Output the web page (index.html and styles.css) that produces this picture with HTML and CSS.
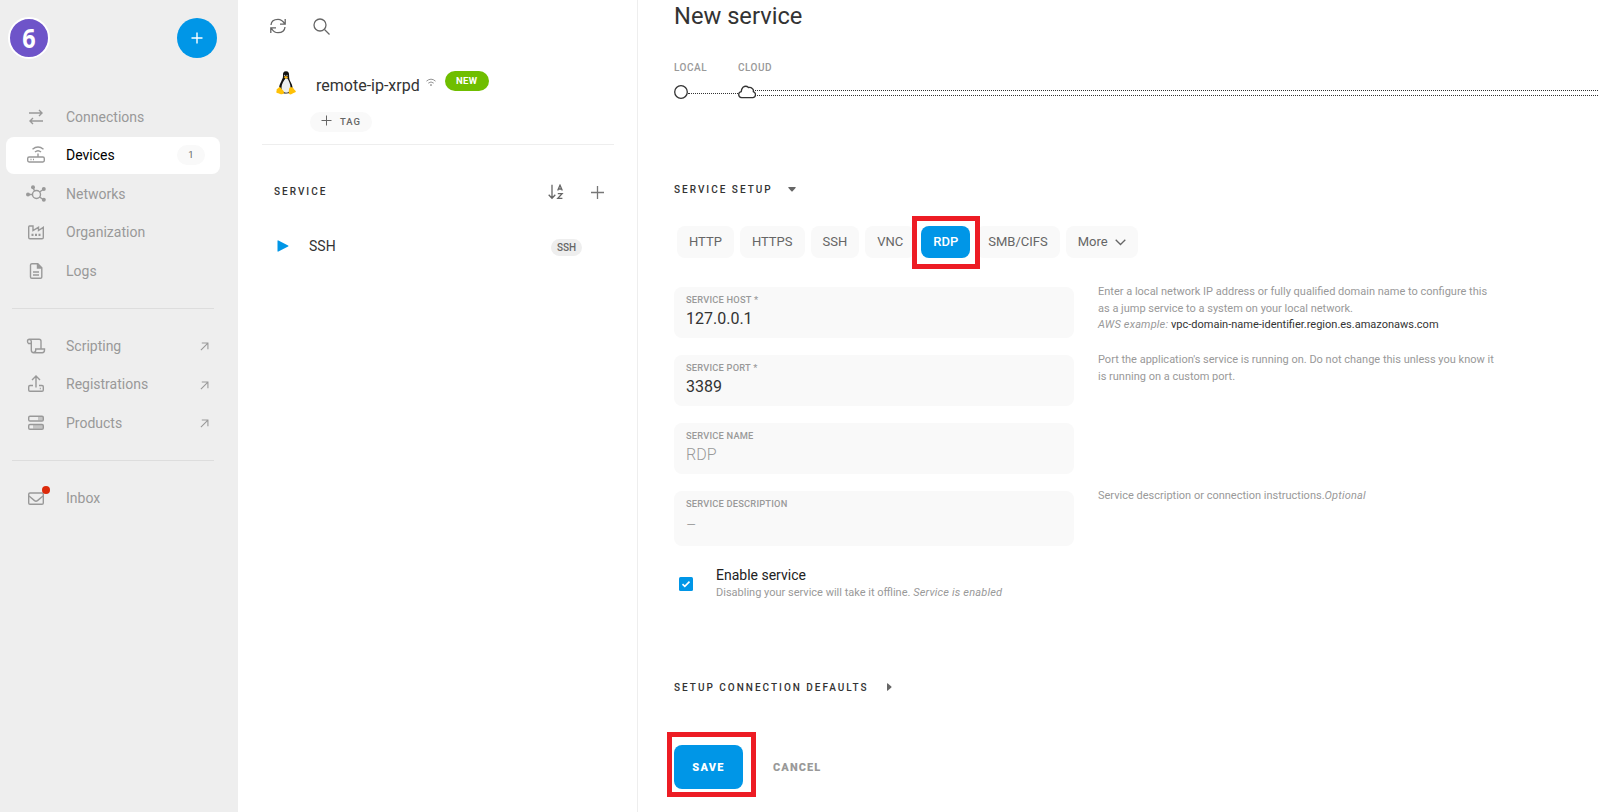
FILE: index.html
```
<!DOCTYPE html>
<html lang="en">
<head>
<meta charset="utf-8">
<meta name="viewport" content="width=device-width, initial-scale=1">
<title>New service</title>
<link rel="stylesheet" href="styles.css">
</head>
<body>

<div class="app">

<!-- Sidebar -->
<div class="sidebar">
  <div class="sidebar-top">
    <div class="avatar"><span>6</span></div>
    <button class="add-button">
      <svg width="12" height="12" viewBox="0 0 12 12"><path d="M6 0.5v11M0.5 6h11" stroke="#fff" stroke-width="1.4"/></svg>
    </button>
  </div>

  <nav class="menu">
    <a class="menu-item">
      <svg class="icon" viewBox="0 0 20 20"><path d="M3 6h13M13 3l3 3-3 3M17 14H4M7 11l-3 3 3 3"/></svg>
      <span>Connections</span>
    </a>
    <a class="menu-item active">
      <svg class="icon" viewBox="0 0 20 20"><rect x="1.7" y="12" width="16.6" height="5" rx="1.4"/><path d="M12 12V8.5M6.5 4.3q5.500-4.600 11 0M9 7q3-2.600 6 0"/><path d="M4.500 14.500h1M7 14.500h1"/></svg>
      <span>Devices</span>
      <span class="count">1</span>
    </a>
    <a class="menu-item">
      <svg class="icon" viewBox="0 0 20 20"><circle cx="10.500" cy="10.500" r="4"/><path d="M2 10.500h4.500M7 3.500l1.600 3.500M13.500 8L18 5M13.500 13l4.500 3"/><g class="dots"><circle cx="2" cy="10.500" r="2"/><circle cx="7" cy="3.200" r="2"/><circle cx="17.800" cy="5" r="2"/><circle cx="17.800" cy="15.800" r="2"/></g></svg>
      <span>Networks</span>
    </a>
    <a class="menu-item">
      <svg class="icon" viewBox="0 0 20 20"><path d="M2.700 5v10.500q0 1.300 1.300 1.300h12q1.300 0 1.300-1.300V5.300L12.500 8.500V5.300L7 8.500V4H3.500q-.8 0-.8 1z"/><path d="M5.500 12.800h2M9 12.800h2M12.500 12.800h2" stroke-width="2.200"/></svg>
      <span>Organization</span>
    </a>
    <a class="menu-item">
      <svg class="icon" viewBox="0 0 20 20"><path d="M5.300 2.700h6.500l4 4v9.300q0 1.300-1.300 1.300H5.800q-1.300 0-1.300-1.300V4q0-1.300 1.300-1.300z"/><path d="M11.500 2.700V7h4.300" fill="#999"/><path d="M7 11h6M7 14h6"/></svg>
      <span>Logs</span>
    </a>
  </nav>

  <hr class="menu-line">

  <nav class="menu">
    <a class="menu-item">
      <svg class="icon" viewBox="0 0 20 20"><path d="M4.600 7.500H2.500q-1-.8-1-2.200 0-2 1.900-2H13q2 0 2 2v7M3.400 3.300q1.900.2 1.900 2.200v8.800q0 2.400 2.400 2.400h8.500q2.300 0 2.300-2.700v-1H9.700v1.300q0 2-2 2"/></svg>
      <span>Scripting</span>
      <svg class="out" viewBox="0 0 10 10"><path d="M1 9l7.500-7.500M2 1.200h6.800V8"/></svg>
    </a>
    <a class="menu-item">
      <svg class="icon" viewBox="0 0 20 20"><path d="M10 13.500V2.500M6 6l4-4 4 4M7 11.500H4q-1.300 0-1.300 1.300V16q0 1.300 1.300 1.300h12q1.300 0 1.300-1.300v-3.200q0-1.300-1.300-1.300h-3M13.800 14.500h1"/></svg>
      <span>Registrations</span>
      <svg class="out" viewBox="0 0 10 10"><path d="M1 9l7.500-7.500M2 1.200h6.800V8"/></svg>
    </a>
    <a class="menu-item">
      <svg class="icon" viewBox="0 0 20 20"><path d="M12 3.500h5v4h-5zM7 11.800h10v4H7z" class="shade"/><rect x="2.700" y="3.200" width="14.600" height="4.800" rx="1.300"/><rect x="2.700" y="11.500" width="14.600" height="4.800" rx="1.300"/></svg>
      <span>Products</span>
      <svg class="out" viewBox="0 0 10 10"><path d="M1 9l7.500-7.500M2 1.200h6.800V8"/></svg>
    </a>
  </nav>

  <hr class="menu-line">

  <nav class="menu">
    <a class="menu-item">
      <svg class="icon" viewBox="0 0 20 20"><rect x="2.700" y="5" width="14.600" height="11.300" rx="1.300"/><path d="M3 8l5.500 4.600q1.500 1.200 3 0L17 8"/></svg>
      <span>Inbox</span>
      <i class="unread"></i>
    </a>
  </nav>
</div>

<!-- Device and its services -->
<div class="device">
  <div class="toolbar">
    <svg width="16" height="16" viewBox="0 0 16 16"><path d="M1 7Q1.500 1.300 8 1.300q4 0 6.500 4.200M15.200 1v5.200H10M15 9q-.5 5.700-7 5.700-4 0-6.500-4.200M.8 15V9.800H6"/></svg>
    <svg width="17" height="17" viewBox="0 0 17 17"><circle cx="7" cy="7" r="6"/><path d="M11.500 11.500l5 5"/></svg>
  </div>

  <div class="device-head">
    <svg class="tux" width="20" height="24" viewBox="0 0 20 24">
      <path d="M10 .3C7.500.3 6.800 2 7 4.500c.2 2.500-.8 3.500-1.800 6C4 13 2.800 15 3.200 18c.5 3.500 3 4.500 6.800 4.500s6.200-1.500 6.500-4.500c.3-3-1-5.500-2.400-8-.9-1.700-1-3.500-1-5.200C13.200 1.800 12.500.3 10 .3z" fill="#111"/>
      <path d="M9.500 7.500C7.800 9.500 5.500 13 5.500 16.500c0 3 1.700 5.200 4.500 5.200s4.600-2 4.600-5c0-3.500-2-7-3.100-9.200z" fill="#eceff1"/>
      <circle cx="8.600" cy="4.500" r=".7" fill="#bbb"/><circle cx="11" cy="4.500" r=".7" fill="#bbb"/>
      <path d="M7.700 6l2-1 2.600 1-2.400 1.900z" fill="#fbb615"/>
      <path d="M3.800 15.800L7.500 20c1 1.800.3 3.300-1.500 3.300-1.700 0-3.300-1-5-1.300-1-.3-.8-1.200-.4-2 .2-1.500-.2-2 .8-2.300 1.200-.3 1.300-1.400 2.400-1.900zM16 16.200c1 .2 1.500 1.200 2.200 2.300l1.500 1.500c.5.800-.5 1.200-1.600 1.700-1.700.8-2.800 2-4.400 1.600-1.500-.4-1-2.500-.7-4.500.1-1.500.5-2.600 1.400-2.600z" fill="#ffc107"/>
    </svg>
    <div class="device-info">
      <div class="device-name">
        <span>remote-ip-xrpd</span>
        <svg width="11" height="9" viewBox="0 0 11 9"><path d="M.5 3Q5.500-1.300 10.500 3M2.500 5.200q3-2.600 6 0" /><circle cx="5.500" cy="7.300" r=".6"/></svg>
        <b class="new">NEW</b>
      </div>
      <button class="tag">
        <svg width="11" height="11" viewBox="0 0 11 11"><path d="M5.500 .5v10M.5 5.500h10"/></svg>
        <span>TAG</span>
      </button>
    </div>
  </div>

  <div class="list-title">
    <h3 class="heading">SERVICE</h3>
    <svg class="sort" width="16" height="16" viewBox="0 0 16 16"><path d="M4 .8v13M.7 10.800L4 14.200l3.300-3.400M9.700 6.500l2.300-5.300 2.300 5.300M10.300 5h3.400M9.800 9.700h4.300l-4.300 4.600h4.600"/></svg>
    <svg class="plus" width="13" height="13" viewBox="0 0 13 13"><path d="M6.500 0v13M0 6.500h13"/></svg>
  </div>

  <div class="service-row">
    <svg width="12" height="12" viewBox="0 0 12 12"><path d="M.5 .9Q.5 0 1.400.4l9.700 5q.9.600 0 1.200l-9.700 5Q.5 12 .5 11.100z" fill="#0096e7"/></svg>
    <span>SSH</span>
    <span class="type">SSH</span>
  </div>
</div>

<!-- New service form -->
<div class="main">
  <h1 class="title">New service</h1>

  <div class="route">
    <div class="hop local">
      <label>LOCAL</label>
      <div class="track">
        <svg width="14" height="14" viewBox="0 0 14 14"><circle cx="7" cy="7" r="6.300"/></svg>
        <i class="single"></i>
      </div>
    </div>
    <div class="hop cloud">
      <label>CLOUD</label>
      <div class="track">
        <svg width="18" height="14" viewBox="0 0 18 14"><path d="M3.500 12.700Q.7 12.200.7 9.500q0-2.300 2.500-2.800Q3.500 3.700 5 2.200q3-2 5.500.3 2.200-.5 4 1.200 1.300 1 .8 3 2.200.8 2.200 3 0 2.500-2.500 3z"/></svg>
        <i class="double"></i>
      </div>
    </div>
  </div>

  <h3 class="heading setup">SERVICE SETUP <svg width="8" height="5" viewBox="0 0 8 5"><path d="M.8 0h6.400q1 0 .3.900L4.600 4.300q-.6.600-1.200 0L.5.900Q-.2 0 .8 0z"/></svg></h3>

  <div class="types">
    <button>HTTP</button>
    <button>HTTPS</button>
    <button>SSH</button>
    <button>VNC</button>
    <button class="selected">RDP<i class="mark"></i></button>
    <button>SMB/CIFS</button>
    <button>More <svg width="11" height="7" viewBox="0 0 11 7"><path d="M.7.800l4.800 4.700L10.300.800"/></svg></button>
  </div>

  <div class="form-row">
    <div class="field"><label>SERVICE HOST *</label><p>127.0.0.1</p></div>
    <div class="help">Enter a local network IP address or fully qualified domain name to configure this as a jump service to a system on your local network.<br><i>AWS example:</i> <b>vpc-domain-name-identifier.region.es.amazonaws.com</b></div>
  </div>
  <div class="form-row">
    <div class="field"><label>SERVICE PORT *</label><p>3389</p></div>
    <div class="help">Port the application's service is running on. Do not change this unless you know it is running on a custom port.</div>
  </div>
  <div class="form-row">
    <div class="field empty"><label>SERVICE NAME</label><p>RDP</p></div>
  </div>
  <div class="form-row">
    <div class="field empty tall"><label>SERVICE DESCRIPTION</label><p>–</p></div>
    <div class="help">Service description or connection instructions.<i>Optional</i></div>
  </div>

  <div class="enable">
    <svg width="14" height="14" viewBox="0 0 14 14"><rect width="14" height="14" rx="1.500" fill="#0096e7"/><path d="M3.500 7.200l2.300 2.200 4.700-4.800" fill="none" stroke="#fff" stroke-width="1.600"/></svg>
    <div>
      <div class="enable-label">Enable service</div>
      <div class="enable-help">Disabling your service will take it offline. <i>Service is enabled</i></div>
    </div>
  </div>

  <h3 class="heading defaults">SETUP CONNECTION DEFAULTS <svg width="5" height="8" viewBox="0 0 5 8"><path d="M0 .8v6.400q0 1 .9.300l3.400-2.900q.6-.6 0-1.200L.9.500Q0-.2 0 .8z"/></svg></h3>

  <div class="actions">
    <button class="save">SAVE<i class="mark"></i></button>
    <button class="cancel">CANCEL</button>
  </div>
</div>

</div>

</body>
</html>
```
FILE: styles.css
```
* {box-sizing: border-box;}

body {
  margin: 0;
  font-family: Roboto, "Liberation Sans", sans-serif;
  font-size: 14px;
  color: #333;
  background: #fff;
}

button {
  font-family: inherit;
  border: none;
  padding: 0;
  cursor: pointer;
}

svg {
  display: block;
  flex: none;
}

.app {
  display: flex;
  height: 812px;
  overflow: hidden;
}

/* Sidebar */
.sidebar {
  width: 238px;
  flex: none;
  background: #eee;
}

.sidebar-top {
  display: flex;
  justify-content: space-between;
  align-items: center;
  height: 42px;
  margin: 17px 21px 39px 8px;
}

.avatar {
  width: 42px;
  height: 42px;
  border: 2px solid #fff;
  border-radius: 50%;
  background: #6e54c9;
  color: #fff;
  font: bold 26px/38px "Noto Sans", sans-serif;
  text-align: center;
}

.avatar span {
  display: block;
  transform: scaleX(.9);
}

.add-button {
  display: flex;
  justify-content: center;
  align-items: center;
  width: 40px;
  height: 40px;
  border-radius: 50%;
  background: #0096e7;
}

.menu-item {
  display: flex;
  align-items: center;
  position: relative;
  height: 37px;
  margin: 0 18px 1.5px 6px;
  padding-left: 20px;
  border-radius: 8px;
  font-size: 14px;
  color: #999;
}

.icon {
  width: 20px;
  height: 20px;
  margin-right: 20px;
  fill: none;
  stroke: #999;
  stroke-width: 1.400;
}

.icon .dots, .icon .shade {
  fill: #999;
  stroke: none;
}

.icon .shade {
  fill: #c4c4c4;
}

.menu-item.active {
  background: #fff;
  color: #000;
}

.count {
  width: 28px;
  margin-left: auto;
  margin-right: 15px;
  border-radius: 10px;
  background: #f9f9f9;
  color: #666;
  font-size: 9.500px;
  line-height: 20px;
  text-align: center;
}

.menu-line {
  height: 1px;
  margin: 19px 24px 18px 12px;
  border: none;
  background: #ddd;
}

.out {
  width: 9px;
  height: 9px;
  margin-top: 2px;
  margin-left: auto;
  margin-right: 11px;
  fill: none;
  stroke: #999;
  stroke-width: 1.200;
}

.unread {
  position: absolute;
  left: 36px;
  top: 7px;
  width: 8px;
  height: 8px;
  border-radius: 50%;
  background: #dc2a0a;
}

/* Device column */
.device {
  width: 400px;
  flex: none;
  padding: 18px 23px 0 24px;
  border-right: 1px solid #eee;
}

.toolbar {
  display: flex;
  gap: 27px;
  height: 17px;
  padding-left: 8px;
}

.toolbar svg, .device-name svg, .tag svg, .list-title svg, .types svg {
  fill: none;
  stroke: #666;
  stroke-width: 1.300;
}

.device-head {
  display: flex;
  height: 110px;
  padding: 36px 0 0 14px;
  border-bottom: 1px solid #eee;
}

.device-info {
  padding-left: 14px;
}

.device-name {
  display: flex;
  height: 20px;
  padding-left: 6px;
  font-size: 16px;
  line-height: 29px;
}

.device-name svg {
  margin: 7px 9px 0 6px;
  width: 10px;
  stroke: #888;
  stroke-width: 1;
}

.new {
  width: 44px;
  height: 20px;
  border-radius: 10px;
  background: #6fbe00;
  color: #fff;
  font-size: 9.500px;
  line-height: 19px;
  letter-spacing: .4px;
  text-align: center;
}

.tag {
  display: flex;
  align-items: center;
  gap: 8px;
  width: 62px;
  height: 20px;
  margin-top: 21px;
  padding: 0 0 1px 11px;
  border-radius: 10px;
  background: #f9f9f9;
  color: #666;
  font-size: 9.500px;
  font-weight: 500;
  letter-spacing: 1px;
}

.tag svg {
  margin-top: -2px;
  stroke-width: 1;
}

.heading {
  margin: 0;
  font-size: 10px;
  font-weight: 500;
  line-height: 14px;
  letter-spacing: 2px;
}

.list-title {
  display: flex;
  align-items: center;
  height: 22px;
  margin-top: 36px;
  padding-left: 12px;
}

.list-title .sort {
  margin-left: auto;
  margin-right: 27px;
}

.list-title .plus {
  margin-right: 10px;
  stroke: #777;
}

.service-row {
  display: flex;
  align-items: center;
  height: 24px;
  margin: 31px 32px 0 15px;
  font-size: 14px;
}

.service-row svg {
  margin-right: 20px;
}

.type {
  width: 31px;
  margin: 3px 0 0 auto;
  border-radius: 9px;
  background: #eee;
  color: #666;
  font-size: 10px;
  font-weight: 500;
  line-height: 17px;
  text-align: center;
}

/* Form column */
.main {
  flex: 1;
  min-width: 0;
  padding-left: 36px;
}

.title {
  height: 32px;
  margin: 0 0 29px;
  font-size: 23.700px;
  font-weight: 400;
  line-height: 32px;
}

.route {
  display: flex;
}

.local {
  width: 64px;
}

.cloud {
  flex: 1;
}

.hop label {
  display: block;
  height: 14px;
  color: #999;
  font-size: 10px;
  font-weight: 500;
  line-height: 14px;
  letter-spacing: .5px;
}

.track {
  display: flex;
  align-items: center;
  height: 14px;
  margin-top: 10px;
}

.track svg {
  fill: none;
  stroke: #333;
  stroke-width: 1.300;
}

.single {
  flex: 1;
  margin-top: 3px;
  border-top: 1px dotted #333;
}

.double {
  flex: 1;
  height: 6px;
  margin-top: 2px;
  margin-left: -1px;
  border-top: 1px dotted #333;
  border-bottom: 1px dotted #333;
}

.heading svg {
  display: inline-block;
  fill: #666;
}

.setup {
  margin-top: 84px;
}

.setup svg {
  margin: 0 0 1px 11px;
}

.types {
  display: flex;
  gap: 6px;
  margin: 29px 0 29px 3px;
}

.types button {
  position: relative;
  height: 32px;
  padding: 0 12px;
  border-radius: 8px;
  background: #f9f9f9;
  color: #666;
  font-size: 13px;
  line-height: 32px;
}

.types svg {
  display: inline-block;
  margin-left: 4px;
}

.types .selected {
  z-index: 1;
  background: #0096e7;
  color: #fff;
  font-weight: 500;
}

/* Red frames around the buttons to click */
.mark {
  position: absolute;
  border: 5px solid #ed1c24;
}

.selected .mark {
  inset: -10px -10px -11px -9px;
}

.save .mark {
  inset: -13px -13px -8px -7px;
}

.form-row {
  display: flex;
  gap: 24px;
  height: 51px;
  margin-bottom: 17px;
}

.field {
  width: 400px;
  height: 51px;
  padding: 6px 12px 0;
  border-radius: 8px;
  background: #f9f9f9;
}

.field label {
  display: block;
  color: #999;
  font-size: 9.300px;
  font-weight: 500;
  line-height: 13px;
  letter-spacing: .2px;
}

.field p {
  margin: 3px 0 0;
  font-size: 16px;
  line-height: 20px;
}

.field.empty p {
  color: #999;
  font-weight: 300;
}

.field.tall {
  height: 55px;
}

.field.tall p {
  margin-top: 6px;
}

.help {
  width: 402px;
  margin-top: -3px;
  color: #999;
  font-size: 11px;
  line-height: 16.500px;
}

.help i, .enable-help i {
  letter-spacing: .18px;
}

.help b {
  color: #333;
  font-weight: 400;
}

.enable {
  display: flex;
  align-items: center;
  height: 40px;
  margin-top: 22px;
  padding-left: 5px;
}

.enable svg {
  margin-right: 23px;
}

.enable-label {
  line-height: 18px;
  color: #222;
}

.enable-help {
  color: #999;
  font-size: 11px;
  line-height: 18px;
}

.defaults {
  margin-top: 77px;
}

.defaults svg {
  margin: 0 0 0 14px;
}

.actions {
  display: flex;
  align-items: center;
  gap: 30px;
  margin-top: 50px;
}

.save {
  position: relative;
  width: 69px;
  height: 44px;
  border-radius: 8px;
  background: #0096e7;
  color: #fff;
  font-size: 11px;
  font-weight: 900;
  letter-spacing: 1.300px;
}

.cancel {
  background: none;
  color: #999;
  font-size: 11px;
  font-weight: 900;
  letter-spacing: 1.100px;
}
```
